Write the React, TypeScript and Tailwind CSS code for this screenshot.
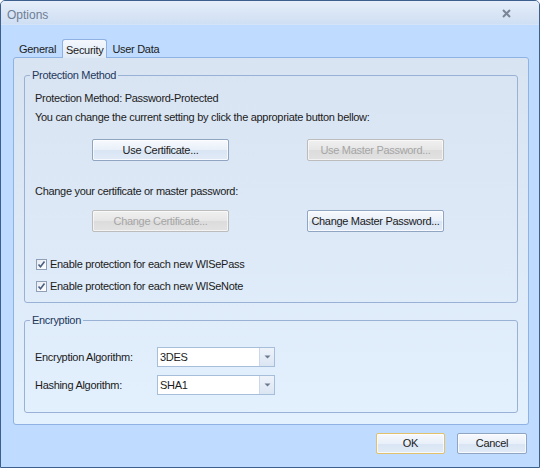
import React from "react";

const font = { fontFamily: '"Liberation Sans", Arial, sans-serif' };

function Btn({ children, disabled, w = "w-[137px]", h = "h-[22px]", def }: { children: React.ReactNode; disabled?: boolean; w?: string; h?: string; def?: boolean }) {
  if (disabled) {
    return (
      <div className={`${w} ${h} flex items-center justify-center whitespace-nowrap rounded-[2px] border border-[#bcbcbc] bg-[linear-gradient(#f0f0f0,#e6e6e6_50%,#dcdcdc_51%,#e2e2e2)] text-[11px] text-[#a5a5a5] shadow-[inset_0_0_0_1px_rgba(255,255,255,0.6)]`}>
        {children}
      </div>
    );
  }
  return (
    <div className={`${w} ${h} flex items-center justify-center whitespace-nowrap rounded-[2px] border ${def ? "border-[#e3c06a]" : "border-[#8fa5c2]"} bg-[linear-gradient(#f7f9fd,#e9f0f9_50%,#d9e5f4_51%,#e2ebf7)] text-[11px] text-[#1b1b1b] shadow-[inset_0_0_0_1px_rgba(255,255,255,0.7)]`}>
      {children}
    </div>
  );
}

function Check({ label }: { label: string }) {
  return (
    <div className="flex items-center h-[14px]">
      <div className="w-[11px] h-[11px] border border-[#8f9fb5] bg-[linear-gradient(135deg,#e6ebf2,#ffffff)] flex items-center justify-center ml-[1px]">
        <svg width="9" height="9" viewBox="0 0 9 9">
          <path d="M1.5 4.5 L3.5 6.8 L7.5 1.5" fill="none" stroke="#4a5f80" strokeWidth="1.6" />
        </svg>
      </div>
      <span className="ml-[3px] text-[11px] text-[#1b1b1b] leading-[14px]">{label}</span>
    </div>
  );
}

function Select({ value }: { value: string }) {
  return (
    <div className="w-[118px] h-[20px] flex border border-[#a6bed9] bg-white">
      <div className="flex-1 flex items-center pl-[2px] text-[11px] text-[#1b1b1b]">{value}</div>
      <div className="w-[15px] flex items-center justify-center bg-[linear-gradient(#eef3fa,#dbe6f3)] border-l border-[#c9d8ea]">
        <svg width="7" height="4" viewBox="0 0 7 4">
          <path d="M0.5 0.5 L6.5 0.5 L3.5 3.5 Z" fill="#6b7a8f" />
        </svg>
      </div>
    </div>
  );
}

export default function App() {
  return (
    <div style={font} className="w-[540px] h-[468px] overflow-hidden bg-[#bfdbff] border border-[#3d5f8e] rounded-t-[5px] flex flex-col tracking-[-0.3px]">
      {/* title bar */}
      <div className="h-[24px] flex items-center justify-between bg-[linear-gradient(#e6eefa,#dae6f6_50%,#cfdff3)] border-b border-[#d5e3f6] pl-[6px] pr-[28px] shrink-0">
        <span className="text-[12px] tracking-normal text-[#6e7e94] leading-[16px] mt-[5px]">Options</span>
        <svg width="9" height="9" viewBox="0 0 9 9" className="mt-[2px]">
          <path d="M1 1 L8 8 M8 1 L1 8" stroke="#7a8698" strokeWidth="2" />
        </svg>
      </div>

      <div className="flex flex-col pl-[12px] pr-[10px]">
        {/* tabs */}
        <div className="flex items-end h-[18px] mt-[14px] text-[11px] text-[#1b1b1b]">
          <div className="pl-[6px] pr-[6px] h-[16px] flex items-center">General</div>
          <div className="relative z-10 -mb-[1px] h-[19px] px-[3px] flex items-start pt-[2px] border border-b-0 border-[#8db2e3] rounded-t-[3px] bg-[linear-gradient(#f4f8fd,#e0eaf6)]">Security</div>
          <div className="pl-[5px] h-[16px] flex items-center">User Data</div>
        </div>

        {/* panel */}
        <div className="h-[368px] border border-[#8db2e3] rounded-[3px] bg-[linear-gradient(#d9e4f2,#dce8f6_40%,#e3f0fd)] pt-[10px] px-[10px]">
          <fieldset className="border border-[#9ab1d6] rounded-[3px] h-[235px] px-[10px]">
            <legend className="ml-[-5px] px-[2px] text-[11px] leading-[14px] text-[#22385c]">Protection Method</legend>
            <div className="mt-[9px] text-[11px] leading-[14px] text-[#1b1b1b]">Protection Method: Password-Protected</div>
            <div className="mt-[5px] text-[11px] leading-[14px] text-[#1b1b1b]">You can change the current setting by click the appropriate button bellow:</div>
            <div className="flex mt-[15px] ml-[57px] gap-[78px]">
              <Btn>Use Certificate...</Btn>
              <Btn disabled>Use Master Password...</Btn>
            </div>
            <div className="mt-[23px] text-[11px] leading-[14px] text-[#1b1b1b]">Change your certificate or master password:</div>
            <div className="flex mt-[12px] ml-[57px] gap-[78px]">
              <Btn disabled>Change Certificate...</Btn>
              <Btn>Change Master Password...</Btn>
            </div>
            <div className="mt-[25px]">
              <Check label="Enable protection for each new WISePass" />
            </div>
            <div className="mt-[8px]">
              <Check label="Enable protection for each new WISeNote" />
            </div>
          </fieldset>

          <fieldset className="mt-[10px] border border-[#9ab1d6] rounded-[3px] h-[100px] px-[10px]">
            <legend className="ml-[-5px] px-[2px] text-[11px] leading-[14px] text-[#22385c]">Encryption</legend>
            <div className="flex items-center mt-[20px]">
              <div className="w-[122px] text-[11px] text-[#1b1b1b]">Encryption Algorithm:</div>
              <Select value="3DES" />
            </div>
            <div className="flex items-center mt-[8px]">
              <div className="w-[122px] text-[11px] text-[#1b1b1b]">Hashing Algorithm:</div>
              <Select value="SHA1" />
            </div>
          </fieldset>
        </div>

        {/* bottom buttons */}
        <div className="flex justify-end gap-[12px] mt-[8px] pr-[2px]">
          <Btn w="w-[69px]" h="h-[21px]" def>OK</Btn>
          <Btn w="w-[70px]" h="h-[21px]">Cancel</Btn>
        </div>
      </div>
    </div>
  );
}
